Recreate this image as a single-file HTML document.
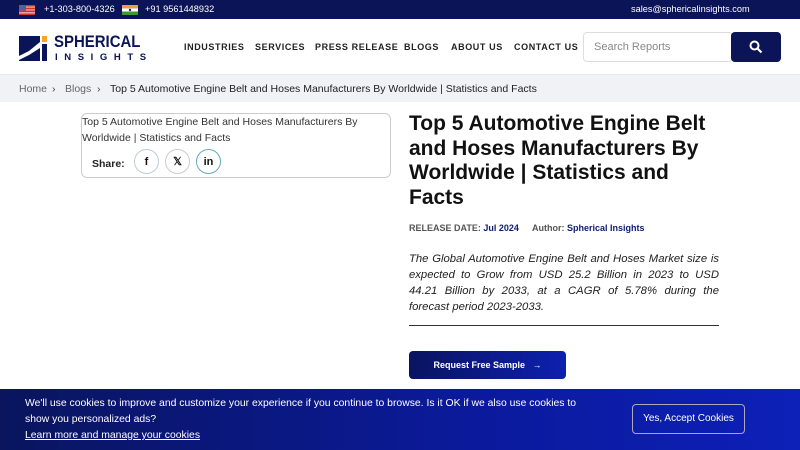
<!DOCTYPE html>
<html><head><meta charset="utf-8"><style>
*{margin:0;padding:0;box-sizing:border-box}
body{width:800px;height:450px;overflow:hidden;font-family:"Liberation Sans",sans-serif;background:#fff;position:relative;color:#1a1a1a}
.top{height:19px;background:#0b1456;color:#fff;font-size:9.2px;position:relative}
.top span{position:absolute;top:4px}
.flag{position:absolute;top:5px;width:16px;height:10px}
.hdr{height:56px;position:relative;border-bottom:1px solid #e6e8ee}
.nav{position:absolute;top:23px;font-size:9px;font-weight:bold;color:#222;letter-spacing:.6px}
.crumb{height:27px;background:#f0f2f6;font-size:10.5px;color:#222;position:relative}
.crumb span{position:absolute;top:8px}
.box{position:absolute;left:81px;top:113px;width:310px;height:65px;border:1px solid #ccc;border-radius:6px;font-size:10.5px;line-height:16px;color:#333}
.ci{position:absolute;top:35px;width:25px;height:25px;border-radius:50%;border:1px solid #ccc;display:flex;align-items:center;justify-content:center;font-weight:bold;font-size:11px;color:#111}
h1{position:absolute;left:409px;top:112px;width:320px;font-size:21px;line-height:24.5px;font-weight:bold;color:#111}
.meta{position:absolute;top:223px;font-size:9px;font-weight:bold;color:#555}
.meta b{color:#0b1c6e}
.desc{position:absolute;left:409px;top:251px;width:310px;font-size:11.3px;line-height:16px;font-style:italic;text-align:justify;color:#222}
.rule{position:absolute;left:409px;top:325px;width:310px;height:1px;background:#333}
.btn{position:absolute;left:409px;top:351px;width:157px;height:28px;border-radius:4px;background:linear-gradient(90deg,#0a1460,#0d20b0);color:#fff;font-size:9px;font-weight:bold;display:flex;align-items:center;justify-content:center}
.cookie{position:absolute;left:0;top:389px;width:800px;height:61px;background:linear-gradient(90deg,#0a155e,#0b1a9c 60%,#0d20b8);color:#fff;font-size:10.4px;line-height:16px}
</style></head><body>
<div class="top">
<svg class="flag" style="left:19px" viewBox="0 0 16 10"><rect width="16" height="10" fill="#e8a0a0"/><rect y="0" width="16" height="1.4" fill="#c33"/><rect y="2.8" width="16" height="1.4" fill="#c33"/><rect y="5.6" width="16" height="1.4" fill="#c33"/><rect y="8.6" width="16" height="1.4" fill="#c33"/><rect width="7" height="5.5" fill="#5060a0"/></svg>
<span style="left:44px">+1-303-800-4326</span>
<svg class="flag" style="left:122px" viewBox="0 0 16 10"><rect width="16" height="3.3" fill="#f29a33"/><rect y="3.3" width="16" height="3.4" fill="#fff"/><rect y="6.7" width="16" height="3.3" fill="#3a9a3a"/><circle cx="8" cy="5" r="1.2" fill="#226"/></svg>
<span style="left:145px">+91 9561448932</span>
<span style="left:631px">sales@sphericalinsights.com</span>
</div>
<div class="hdr">
<svg style="position:absolute;left:19px;top:15px" width="30" height="27" viewBox="0 0 30 27"><rect x="0" y="2" width="21" height="25" fill="#0b1456"/><path d="M0 22 L10 17 L21 8 L21 14 L10 21 L0 26Z" fill="#fff"/><rect x="23" y="10" width="5" height="17" fill="#0b1456"/><rect x="23" y="2" width="5" height="6" fill="#f5a623"/></svg>
<div style="position:absolute;left:54px;top:13px;font-size:17px;font-weight:bold;color:#0b1456;transform:scaleX(.88);transform-origin:0 0">SPHERICAL</div>
<div style="position:absolute;left:55px;top:33px;font-size:9.5px;font-weight:bold;color:#0b1456;letter-spacing:6.6px">INSIGHTS</div>
<div class="nav" style="left:184px">INDUSTRIES</div>
<div class="nav" style="left:255px">SERVICES</div>
<div class="nav" style="left:315px">PRESS RELEASE</div>
<div class="nav" style="left:404px">BLOGS</div>
<div class="nav" style="left:451px">ABOUT US</div>
<div class="nav" style="left:514px">CONTACT US</div>
<div style="position:absolute;left:583px;top:13px;width:150px;height:30px;border:1px solid #ddd;border-radius:4px;font-size:11px;color:#888;padding:8px 10px">Search Reports</div>
<div style="position:absolute;left:731px;top:13px;width:50px;height:30px;background:#0b1456;border-radius:4px"><svg style="position:absolute;left:18px;top:8px" width="14" height="14" viewBox="0 0 14 14"><circle cx="5.5" cy="5.5" r="4" stroke="#fff" stroke-width="2" fill="none"/><path d="M8.5 8.5L12.5 12.5" stroke="#fff" stroke-width="2.2"/></svg></div>
</div>
<div class="crumb"><span style="left:19px;color:#666">Home</span><span style="left:52px;color:#444">›</span><span style="left:65px;color:#666">Blogs</span><span style="left:97px;color:#444">›</span><span style="left:110px">Top 5 Automotive Engine Belt and Hoses Manufacturers By Worldwide | Statistics and Facts</span></div>
<div class="box">Top 5 Automotive Engine Belt and Hoses Manufacturers By<br>Worldwide | Statistics and Facts
<span style="position:absolute;left:10px;top:42px;font-weight:bold;font-size:10.5px;color:#222">Share:</span>
<div class="ci" style="left:52px;border-color:#bcd">f</div>
<div class="ci" style="left:83px">𝕏</div>
<div class="ci" style="left:114px;border-color:#6ab">in</div>
</div>
<h1>Top 5 Automotive Engine Belt and Hoses Manufacturers By Worldwide | Statistics and Facts</h1>
<div class="meta" style="left:409px">RELEASE DATE: <b>Jul 2024</b></div>
<div class="meta" style="left:532px">Author: <b>Spherical Insights</b></div>
<div class="desc">The Global Automotive Engine Belt and Hoses Market size is expected to Grow from USD 25.2 Billion in 2023 to USD 44.21 Billion by 2033, at a CAGR of 5.78% during the forecast period 2023-2033.</div>
<div class="rule"></div>
<div class="btn">Request Free Sample &nbsp;&nbsp;→</div>
<div class="cookie">
<div style="position:absolute;left:25px;top:7px;width:575px">We'll use cookies to improve and customize your experience if you continue to browse. Is it OK if we also use cookies to show you personalized ads?<br><u>Learn more and manage your cookies</u></div>
<div style="position:absolute;left:632px;top:15px;width:113px;height:30px;border:1px solid #aab;border-radius:4px;font-size:10px;display:flex;align-items:center;justify-content:center">Yes, Accept Cookies</div>
</div>
</body></html>
